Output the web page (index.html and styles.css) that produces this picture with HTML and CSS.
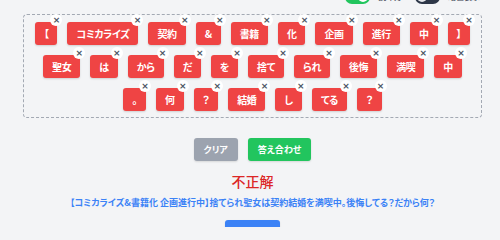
FILE: index.html
```html
<!DOCTYPE html>
<html lang="ja">
<head>
<meta charset="utf-8">
<title>並べ替えクイズ</title>
<link rel="stylesheet" href="styles.css">
</head>
<body>
<div class="page">
  <div class="header">
    <label class="opt"><span class="switch on"><span class="knob"></span></span><span class="opt-label">読み方</span></label>
    <label class="opt"><span class="switch dark"><span class="knob"></span></span><span class="opt-label">暗色表示</span></label>
  </div>

  <div class="board">
    <div class="row">
      <span class="tile">【<i class="x">×</i></span>
      <span class="tile">コミカライズ<i class="x">×</i></span>
      <span class="tile">契約<i class="x">×</i></span>
      <span class="tile">&amp;<i class="x">×</i></span>
      <span class="tile">書籍<i class="x">×</i></span>
      <span class="tile">化<i class="x">×</i></span>
      <span class="tile">企画<i class="x">×</i></span>
      <span class="tile">進行<i class="x">×</i></span>
      <span class="tile">中<i class="x">×</i></span>
      <span class="tile">】<i class="x">×</i></span>
    </div>
    <div class="row">
      <span class="tile">聖女<i class="x">×</i></span>
      <span class="tile">は<i class="x">×</i></span>
      <span class="tile">から<i class="x">×</i></span>
      <span class="tile">だ<i class="x">×</i></span>
      <span class="tile">を<i class="x">×</i></span>
      <span class="tile">捨て<i class="x">×</i></span>
      <span class="tile">られ<i class="x">×</i></span>
      <span class="tile">後悔<i class="x">×</i></span>
      <span class="tile">満喫<i class="x">×</i></span>
      <span class="tile">中<i class="x">×</i></span>
    </div>
    <div class="row">
      <span class="tile">。<i class="x">×</i></span>
      <span class="tile">何<i class="x">×</i></span>
      <span class="tile">？<i class="x">×</i></span>
      <span class="tile">結婚<i class="x">×</i></span>
      <span class="tile">し<i class="x">×</i></span>
      <span class="tile">てる<i class="x">×</i></span>
      <span class="tile">？<i class="x">×</i></span>
    </div>
  </div>

  <div class="actions">
    <button class="btn btn-gray">クリア</button>
    <button class="btn btn-green">答え合わせ</button>
  </div>

  <div class="result">不正解</div>
  <div class="answer">【コミカライズ&amp;書籍化 企画進行中】捨てられ聖女は契約結婚を満喫中。後悔してる？だから何？</div>

  <div class="next-wrap"><button class="btn btn-blue">次の問題</button></div>
</div>
</body>
</html>
```

FILE: styles.css
```css
html, body {
  margin: 0;
  padding: 0;
  background: #f3f4f6;
  height: 227px;
  overflow: hidden;
}
body {
  font-family: "Noto Sans CJK JP", "Noto Sans", sans-serif;
  font-feature-settings: "palt";
}
.page {
  padding: 0 18px 0 23px;
}
.header {
  margin-top: -10px;
  height: 14px;
  display: flex;
  justify-content: flex-end;
  align-items: center;
  gap: 13px;
  padding-right: 2px;
}
.opt {
  display: flex;
  align-items: center;
  gap: 8px;
}
.opt-label {
  font-size: 8px;
  color: #374151;
  line-height: 14px;
}
.switch {
  position: relative;
  width: 25px;
  height: 14px;
  border-radius: 7px;
  display: block;
}
.switch.on { background: #22c55e; }
.switch.dark { background: #2d3748; }
.knob {
  position: absolute;
  top: 2px;
  width: 10px;
  height: 10px;
  border-radius: 50%;
  background: #ffffff;
}
.switch.on .knob { right: 2px; }
.switch.dark .knob { left: 2px; background: #e5e7eb; }

.board {
  margin-top: 10px;
  border: 1px dashed #a3a9b3;
  border-radius: 4px;
  padding: 7px 0 6px;
  display: flex;
  flex-direction: column;
  gap: 10px;
}
.row {
  display: flex;
  justify-content: center;
  gap: 10px;
}
.tile {
  position: relative;
  display: inline-block;
  height: 23px;
  line-height: 23px;
  padding: 0 9px;
  background: #ef4444;
  color: #ffffff;
  font-size: 10px;
  font-weight: 700;
  letter-spacing: -0.4px;
  border-radius: 3px;
  box-shadow: 0 1px 2px rgba(0,0,0,0.15);
}
.x {
  position: absolute;
  top: -8px;
  right: -5px;
  width: 12px;
  height: 12px;
  border-radius: 50%;
  background: #ffffff;
  color: #4b5563;
  font-style: normal;
  font-size: 9px;
  line-height: 12px;
  letter-spacing: 0;
  text-align: center;
  font-weight: 700;
  font-family: "DejaVu Sans", sans-serif;
}

.actions {
  margin-top: 20px;
  display: flex;
  justify-content: center;
  gap: 10px;
}
.btn {
  border: none;
  height: 23px;
  padding: 0 10px;
  border-radius: 3px;
  color: #ffffff;
  font-family: "Noto Sans CJK JP", "Noto Sans", sans-serif;
  font-feature-settings: "palt";
  font-size: 9px;
  font-weight: 700;
  box-shadow: 0 1px 2px rgba(0,0,0,0.12);
  white-space: nowrap;
}
.btn-gray { background: #9ca3af; }
.btn-green { background: #22c55e; }
.btn-blue { background: #3b82f6; }

.result {
  margin-top: 10px;
  text-align: center;
  color: #dc2626;
  font-size: 14px;
  line-height: 20px;
  font-weight: 500;
}
.answer {
  margin-top: 6px;
  text-align: center;
  color: #3b82f6;
  font-size: 9px;
  line-height: 12px;
  font-weight: 600;
}
.next-wrap {
  margin-top: 11px;
  display: flex;
  justify-content: center;
}
```
